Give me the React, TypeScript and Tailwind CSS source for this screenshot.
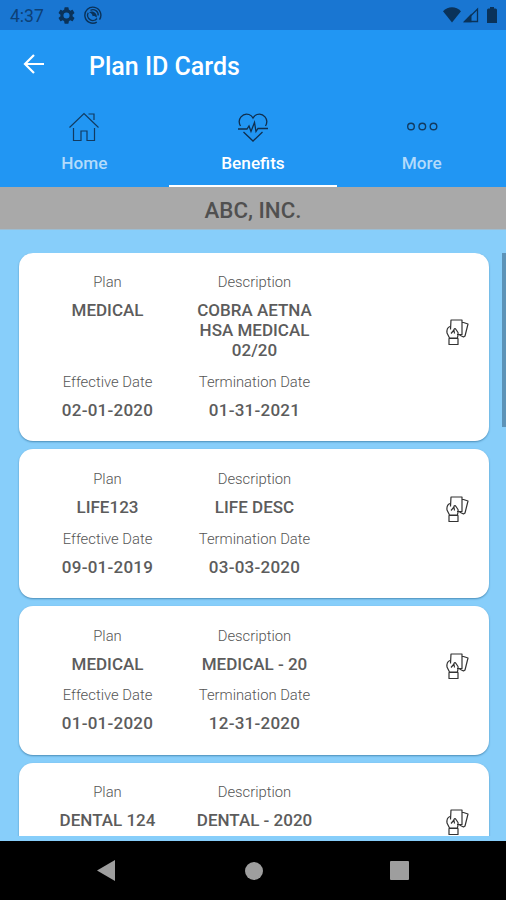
import React from "react";
import clsx from "clsx";

const plans = [
  {
    plan: "MEDICAL",
    description: ["COBRA AETNA", "HSA MEDICAL", "02/20"],
    effective: "02-01-2020",
    termination: "01-31-2021",
  },
  { plan: "LIFE123", description: ["LIFE DESC"], effective: "09-01-2019", termination: "03-03-2020" },
  { plan: "MEDICAL", description: ["MEDICAL - 20"], effective: "01-01-2020", termination: "12-31-2020" },
  { plan: "DENTAL 124", description: ["DENTAL - 2020"] },
];

export default function App() {
  return (
    <div className="flex h-[900px] w-[506px] flex-col overflow-hidden bg-[#87cefa] font-['Roboto',sans-serif]">
      <StatusBar />
      <header className="h-[157px] shrink-0 bg-[#2196f3]">
        <div className="flex h-[70px] items-center pl-[23px]">
          <svg className="size-[22px]" viewBox="0 0 22 22" fill="none" stroke="#fff" strokeWidth="2.2">
            <path d="M21 10H3M11 1 2 10l9 9" />
          </svg>
          <h1 className="ml-11 pt-[3px] text-[25px] font-medium text-white">Plan ID Cards</h1>
        </div>
        <nav className="grid h-[88px] grid-cols-3">
          <Tab label="Home" icon={<HomeIcon />} />
          <Tab label="Benefits" icon={<HeartIcon />} active />
          <Tab label="More" icon={<MoreIcon />} />
        </nav>
      </header>
      <div className="flex h-[43px] shrink-0 items-center justify-center border-b border-[#9dbdd2] bg-[#a9a9a9] pt-1.5 text-[22.3px] font-medium text-[#505050]">
        ABC, INC.
      </div>
      <main className="relative min-h-0 flex-1 pt-[22.5px]">
        <div className="flex h-[583px] flex-col gap-2 overflow-hidden pr-[17px] pl-[19px]">
          {plans.map((item, i) => (
            <PlanCard key={i} {...item} />
          ))}
        </div>
        <div className="absolute top-[23px] right-0 h-[174px] w-1 bg-[#5c93b8]"></div>
      </main>
      <NavigationBar />
    </div>
  );
}

const StatusBar = () => (
  <div className="flex h-[30px] shrink-0 items-center bg-[#1976d2] pr-[9px] pl-[10px] text-[#0a3259]">
    <span className="w-[48px] pt-0.5 text-[17.5px] leading-5 text-[#0d4076]">4:37</span>
    <svg className="size-[17px]" viewBox="2 2 20 20" fill="currentColor">
      <path d="M19.14 12.94a7 7 0 0 0 0-1.88l2.03-1.58a.5.5 0 0 0 .12-.61l-1.92-3.32a.5.5 0 0 0-.59-.22l-2.39.96a7 7 0 0 0-1.62-.94l-.36-2.54a.5.5 0 0 0-.48-.41h-3.84a.5.5 0 0 0-.47.41l-.36 2.54a7 7 0 0 0-1.62.94l-2.39-.96a.5.5 0 0 0-.59.22L2.74 8.87a.5.5 0 0 0 .12.61l2.03 1.58a7 7 0 0 0 0 1.88l-2.03 1.58a.5.5 0 0 0-.12.61l1.92 3.32c.12.22.37.29.59.22l2.39-.96c.5.38 1.03.7 1.62.94l.36 2.54c.05.24.24.41.48.41h3.84c.24 0 .44-.17.47-.41l.36-2.54a7 7 0 0 0 1.62-.94l2.39.96c.22.08.47 0 .59-.22l1.92-3.32a.5.5 0 0 0-.12-.61ZM12 15.6a3.6 3.6 0 1 1 0-7.2 3.6 3.6 0 0 1 0 7.2Z" />
    </svg>
    <svg className="ml-[9px] size-[18px]" viewBox="0 0 18 18" fill="none" stroke="currentColor" strokeWidth="1.4">
      <path d="M12.800 16.100A8 8 0 1 1 15.500 13.600" />
      <path d="M4.200 6.700A5.300 5.300 0 0 0 13 12.500M6.500 4.300A5.300 5.300 0 0 1 14.200 9.500" />
      <path d="M5 6.500c3.500-2.500 8.500.5 7.800 5.300-1.500-1.700-3-2-4.300-1.500.2-1.800-1-3.200-3.500-3.800Z" fill="currentColor" stroke="none" />
    </svg>
    <div className="ml-auto flex items-center">
      <svg className="h-4 w-[18px]" viewBox="0 0 18 16" fill="currentColor">
        <path d="M0 4.200C5-1 13-1 18 4.200L9 15.500Z" />
      </svg>
      <svg className="ml-[2px] size-[16px]" viewBox="0 0 16 16">
        <path d="M14.500 2v12.500H2Z" fill="none" stroke="currentColor" strokeWidth="1.300" />
        <path d="M0 15.200 8.500 6.500v8.700Z" fill="currentColor" />
      </svg>
      <svg className="ml-[8px] h-4 w-[10px]" viewBox="0 0 10 16" fill="currentColor">
        <path d="M3 0h4v1.500h1.500A1.500 1.500 0 0 1 10 3v13H0V3a1.500 1.500 0 0 1 1.500-1.500H3Z" />
      </svg>
    </div>
  </div>
);

const Tab = ({ label, icon, active }: { label: string; icon: React.ReactNode; active?: boolean }) => (
  <button
    className={clsx(
      "flex flex-col items-center border-b-[3px] pt-[11px]",
      active ? "border-white text-white" : "border-transparent text-[#b3dbfb]"
    )}
  >
    {icon}
    <span className="mt-[10px] text-[17.2px] leading-5 font-medium">{label}</span>
  </button>
);

const HomeIcon = () => (
  <svg className="size-8" viewBox="0 0 32 32" fill="none" stroke="#123b61" strokeWidth="1.2">
    <path d="M1.500 16.500 16 2.500 30.500 16.500" />
    <path d="M5.500 17v12.500h7.500v-9.500h6v9.500h7.500V17M20.500 3h5.500v6" />
  </svg>
);

const HeartIcon = () => (
  <svg className="size-8" viewBox="0 0 32 32" fill="none" stroke="#102f4e" strokeWidth="1.3">
    <path d="M3.500 15C-.5 8 6 1.500 12 3.500c2 .8 3.200 2 4 3.500.8-1.500 2-2.700 4-3.500 6-2 12.500 4.500 8.500 11.500" />
    <path d="M1 18h9l2-3 2 5.500 3.500-9 1.500 9 2-3h10M6.500 21l9.500 9 9.500-9" />
  </svg>
);

const MoreIcon = () => (
  <svg className="size-8" viewBox="0 0 32 32" fill="none" stroke="#123b61" strokeWidth="1.4">
    <circle cx="5" cy="15.500" r="3.300" />
    <circle cx="16.300" cy="15.500" r="3.300" />
    <circle cx="27.500" cy="15.500" r="3.300" />
  </svg>
);

type PlanProps = { plan: string; description: string[]; effective?: string; termination?: string };

const PlanCard = ({ plan, description, effective, termination }: PlanProps) => (
  <section className="flex min-h-[148.7px] shrink-0 rounded-[14px] bg-white pt-[19.8px] pb-[21.2px] shadow-[0_1px_2px_#4b8db8]">
    <div className="grid grid-cols-[147px_147px] content-start gap-y-[11.7px] pl-[15px]">
      <Field label="Plan" value={[plan]} />
      <Field label="Description" value={description} />
      {effective && <Field label="Effective Date" value={[effective]} wide />}
      {termination && <Field label="Termination Date" value={[termination]} wide />}
    </div>
    <CardIcon />
  </section>
);

const Field = ({ label, value, wide }: { label: string; value: string[]; wide?: boolean }) => (
  <div className="text-center whitespace-nowrap">
    <p className="text-[14.8px] leading-5 font-light text-[#555]">{label}</p>
    <div className={clsx("mt-2 text-[17px] leading-5 font-medium text-[#5c5c5c]", wide && "tracking-[0.25px]")}>
      {value.map((line) => (
        <p key={line}>{line}</p>
      ))}
    </div>
  </div>
);

const CardIcon = () => (
  <svg
    className="mt-[-28px] mr-[20px] ml-auto h-[28px] w-[24px] self-center"
    viewBox="0 0 24 28"
    fill="none"
    stroke="#333"
    strokeWidth="1.2"
    strokeLinejoin="round"
  >
    <path d="M5.500 11.500 6 2h11v14.500h-5" />
    <path d="M17 4.500h1.500l4.500 1.500-3 12-1.500 1-4-2" />
    <path d="M5 8.500C2.500 9.500 1.500 11 2 15l2.500 5h8c0-2 1-2.500 .5-5.500L11 11.500c-1-1.500-2.500-.5-2 1l.5 3M6 15.500 9 12" />
    <path d="M4 20.500h9v6H4z" />
  </svg>
);

const NavigationBar = () => (
  <footer className="flex h-[59px] shrink-0 items-center bg-black text-[#9e9e9e]">
    <svg className="ml-[97px] h-[21px] w-[18px]" viewBox="0 0 18 21" fill="currentColor">
      <path d="M18 0v21L0 10.500Z" />
    </svg>
    <div className="ml-[130px] size-[18px] rounded-full bg-[#9e9e9e]"></div>
    <div className="ml-[127px] size-[19px] rounded-[1px] bg-[#9e9e9e]"></div>
  </footer>
);
